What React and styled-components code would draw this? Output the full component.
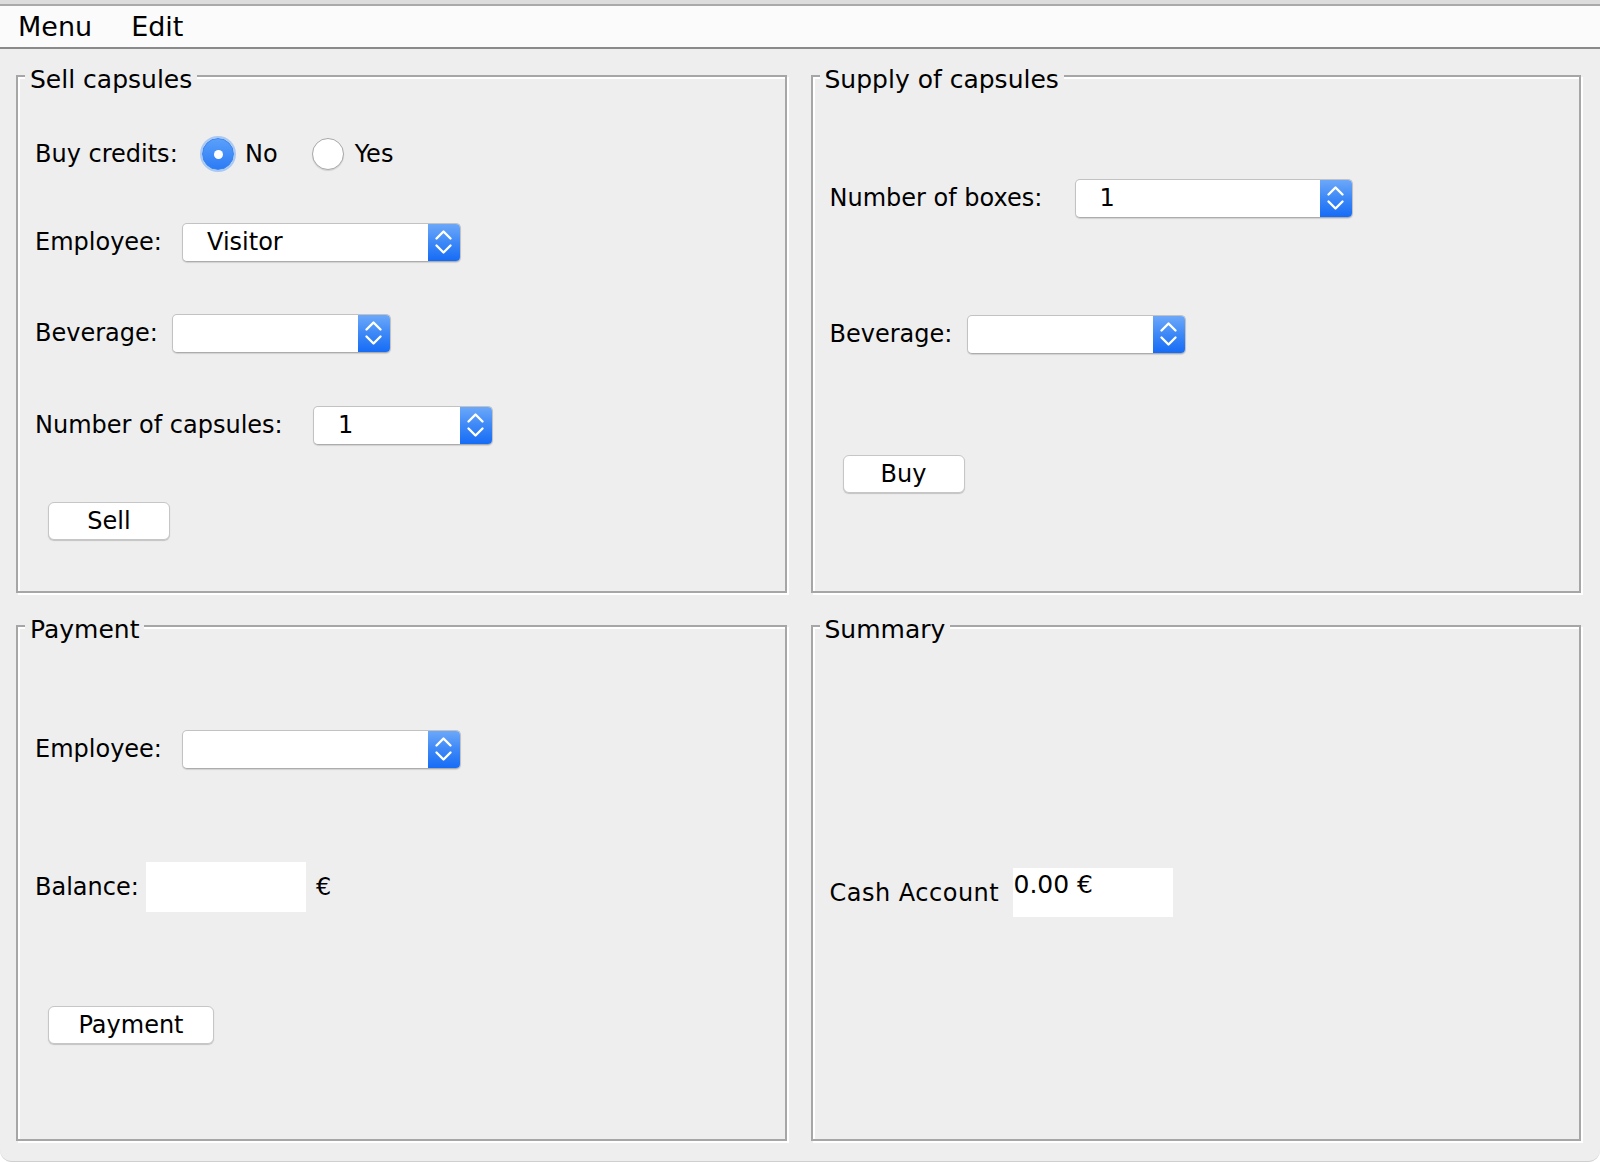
import React from "react";
import styled, { createGlobalStyle } from "styled-components";

const Global = createGlobalStyle`
  html, body { margin: 0; padding: 0; background: #ffffff; }
  body { font-family: "DejaVu Sans", "Liberation Sans", sans-serif; color: #000; }
  * { box-sizing: border-box; }
`;

const Window = styled.div`
  height: 1162px;
  display: flex;
  flex-direction: column;
  background: #eeeeee;
  border-radius: 0 0 12px 12px;
  overflow: hidden;
  border-bottom: 1px solid #cfcfcf;
`;

const TitleStrip = styled.div`
  height: 6px;
  flex-shrink: 0;
  background: #dcdcdc;
  border-bottom: 2px solid #a9a9a9;
`;

const MenuBar = styled.div`
  height: 43px;
  flex-shrink: 0;
  display: flex;
  align-items: center;
  gap: 39px;
  padding-left: 18px;
  background: #fbfbfb;
  border-bottom: 2px solid #8a8a8a;
`;

const MenuItem = styled.span`
  font-size: 27px;
  line-height: 30px;
`;

const Content = styled.div`
  display: grid;
  grid-template-columns: 1fr 1fr;
  grid-template-rows: 518px 516px;
  gap: 32px 24px;
  padding: 26px 19px 0 16px;
`;

const Panel = styled.section`
  position: relative;
  display: flex;
  flex-direction: column;
  padding: 0 17px;
  border: 2px solid #a6a6a6;
  box-shadow: inset 2px 2px 0 #ffffff, 2px 2px 0 #ffffff;
`;

const PanelTitle = styled.span`
  position: absolute;
  top: -11px;
  left: 7px;
  padding: 0 5px;
  background: #eeeeee;
  font-size: 25px;
  line-height: 28px;
  white-space: nowrap;
`;

const Row = styled.div`
  display: flex;
  align-items: center;
  flex-shrink: 0;
  height: ${(p) => p.$h || 40}px;
  margin-top: ${(p) => p.$mt || 0}px;
`;

const Label = styled.span`
  flex-shrink: 0;
  width: ${(p) => (p.$w ? `${p.$w}px` : "auto")};
  font-size: 24px;
  line-height: 28px;
  white-space: nowrap;
  letter-spacing: ${(p) => p.$ls || 0}px;
`;

const Combo = styled.div`
  width: ${(p) => p.$w}px;
  height: 39px;
  display: flex;
  background: #ffffff;
  border: 1px solid #c2c2c2;
  border-bottom-color: #acacac;
  border-radius: 5px;
  box-shadow: 0 1px 1px rgba(0, 0, 0, 0.12);
  overflow: hidden;
`;

const ComboValue = styled.span`
  flex: 1;
  display: flex;
  align-items: center;
  padding-left: 24px;
  font-size: 24px;
  line-height: 28px;
`;

const ComboArrow = styled.span`
  width: 32px;
  flex-shrink: 0;
  display: flex;
  align-items: center;
  justify-content: center;
  background: linear-gradient(#6ca8f9, #3d88f7 50%, #166cf6);
`;

const RadioCircle = styled.span`
  position: relative;
  width: 32px;
  height: 32px;
  flex-shrink: 0;
  border-radius: 50%;
  background: ${(p) => (p.$checked ? "linear-gradient(#5aa0fa, #2c7bf6)" : "#ffffff")};
  border: 1px solid ${(p) => (p.$checked ? "#3a84f0" : "#a9a9a9")};
  box-shadow: ${(p) =>
    p.$checked ? "0 0 0 2px rgba(140, 185, 245, 0.7)" : "0 1px 1px rgba(0,0,0,0.12)"};
  &::after {
    content: "";
    display: ${(p) => (p.$checked ? "block" : "none")};
    position: absolute;
    left: 50%;
    top: 50%;
    width: 9px;
    height: 9px;
    margin: -4.5px 0 0 -4.5px;
    border-radius: 50%;
    background: #ffffff;
  }
`;

const RadioText = styled.span`
  margin-left: 11px;
  margin-right: ${(p) => p.$mr || 0}px;
  font-size: 24px;
  line-height: 28px;
`;

const Button = styled.button`
  width: ${(p) => p.$w}px;
  height: 38px;
  margin-left: 13px;
  padding: 0;
  background: #ffffff;
  border: 1px solid #c6c6c6;
  border-radius: 6px;
  box-shadow: 0 1px 1px rgba(0, 0, 0, 0.18);
  font-family: "DejaVu Sans", "Liberation Sans", sans-serif;
  font-size: 24px;
  line-height: 28px;
  color: #000;
`;

const Field = styled.div`
  width: 160px;
  height: ${(p) => p.$h}px;
  flex-shrink: 0;
  background: #ffffff;
  padding: 3px 0 0 1px;
  font-size: 25px;
  line-height: 28px;
`;

const Unit = styled.span`
  margin-left: 10px;
  font-size: 24px;
  line-height: 28px;
`;

const Chevrons = () => (
  <svg width="32" height="37" viewBox="0 0 32 37">
    <polyline
      points="8.5,14.5 15.5,7.5 22.5,14.5"
      fill="none"
      stroke="#fff"
      strokeWidth="2.4"
      strokeLinecap="round"
      strokeLinejoin="round"
    />
    <polyline
      points="8.5,21.5 15.5,28.5 22.5,21.5"
      fill="none"
      stroke="#fff"
      strokeWidth="2.4"
      strokeLinecap="round"
      strokeLinejoin="round"
    />
  </svg>
);

const Select = ({ w, value }) => (
  <Combo $w={w}>
    <ComboValue>{value}</ComboValue>
    <ComboArrow>
      <Chevrons />
    </ComboArrow>
  </Combo>
);

export default function App() {
  return (
    <>
      <Global />
      <Window>
        <TitleStrip />
        <MenuBar>
          <MenuItem>Menu</MenuItem>
          <MenuItem>Edit</MenuItem>
        </MenuBar>
        <Content>
          <Panel>
            <PanelTitle>Sell capsules</PanelTitle>
            <Row $mt={57}>
              <Label $w={167}>Buy credits:</Label>
              <RadioCircle $checked />
              <RadioText $mr={34}>No</RadioText>
              <RadioCircle />
              <RadioText>Yes</RadioText>
            </Row>
            <Row $mt={48}>
              <Label $w={147}>Employee:</Label>
              <Select w={279} value="Visitor" />
            </Row>
            <Row $mt={51}>
              <Label $w={137}>Beverage:</Label>
              <Select w={219} />
            </Row>
            <Row $mt={52}>
              <Label $w={278}>Number of capsules:</Label>
              <Select w={180} value="1" />
            </Row>
            <Row $mt={56}>
              <Button $w={122}>Sell</Button>
            </Row>
          </Panel>

          <Panel>
            <PanelTitle>Supply of capsules</PanelTitle>
            <Row $mt={101}>
              <Label $w={245}>Number of boxes:</Label>
              <Select w={278} value="1" />
            </Row>
            <Row $mt={96}>
              <Label $w={137}>Beverage:</Label>
              <Select w={219} />
            </Row>
            <Row $mt={100}>
              <Button $w={122}>Buy</Button>
            </Row>
          </Panel>

          <Panel>
            <PanelTitle>Payment</PanelTitle>
            <Row $mt={102}>
              <Label $w={147}>Employee:</Label>
              <Select w={279} />
            </Row>
            <Row $mt={93} $h={50}>
              <Label $w={111}>Balance:</Label>
              <Field $h={50} />
              <Unit>€</Unit>
            </Row>
            <Row $mt={93}>
              <Button $w={166}>Payment</Button>
            </Row>
          </Panel>

          <Panel>
            <PanelTitle>Summary</PanelTitle>
            <Row $mt={241} $h={49}>
              <Label $w={183} $ls={0.5}>Cash Account</Label>
              <Field $h={49}>0.00 €</Field>
            </Row>
          </Panel>
        </Content>
      </Window>
    </>
  );
}
